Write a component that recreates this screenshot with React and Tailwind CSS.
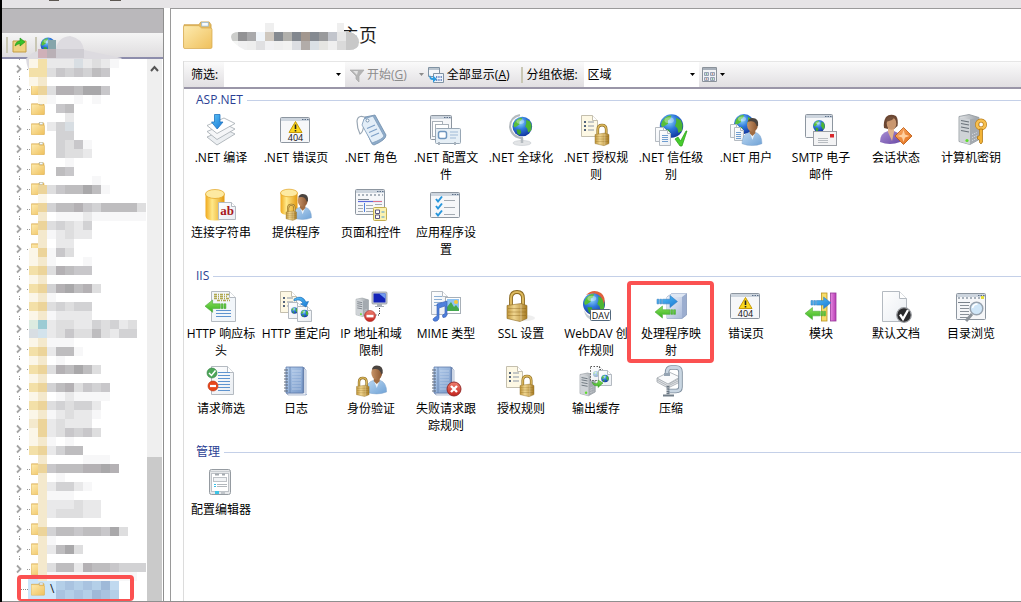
import React from "react";

/* ---------- shared drawing parts ---------- */

function Defs() {
  return (
    <svg width="0" height="0" className="absolute" aria-hidden="true">
      <defs>
        <linearGradient id="gFolder" x1="0" y1="0" x2="1" y2="1">
          <stop offset="0" stopColor="#fdebb0" /><stop offset="1" stopColor="#efc05c" />
        </linearGradient>
        <radialGradient id="gSea" cx="0.4" cy="0.3" r="0.75">
          <stop offset="0" stopColor="#8fd8fa" /><stop offset="0.45" stopColor="#2f78dc" /><stop offset="1" stopColor="#10309a" />
        </radialGradient>
        <linearGradient id="gGold" x1="0" y1="0" x2="1" y2="0">
          <stop offset="0" stopColor="#c0963a" /><stop offset="0.35" stopColor="#f0d690" /><stop offset="1" stopColor="#a87c24" />
        </linearGradient>
        <linearGradient id="gDb" x1="0" y1="0" x2="1" y2="0">
          <stop offset="0" stopColor="#f0a91c" /><stop offset="0.35" stopColor="#ffe98a" /><stop offset="1" stopColor="#e39a10" />
        </linearGradient>
        <linearGradient id="gBlue" x1="0" y1="0" x2="1" y2="1">
          <stop offset="0" stopColor="#5cc4f8" /><stop offset="1" stopColor="#1878d4" />
        </linearGradient>
        <linearGradient id="gGreen" x1="0" y1="0" x2="0" y2="1">
          <stop offset="0" stopColor="#8be05e" /><stop offset="1" stopColor="#35b11c" />
        </linearGradient>
        <linearGradient id="gServer" x1="0" y1="0" x2="1" y2="0">
          <stop offset="0" stopColor="#e4e6e8" /><stop offset="1" stopColor="#9aa0a6" />
        </linearGradient>
        <linearGradient id="gShirt" x1="0" y1="0" x2="1" y2="1">
          <stop offset="0" stopColor="#bcd8f2" /><stop offset="1" stopColor="#6fa2d6" />
        </linearGradient>
        <linearGradient id="gPurple" x1="0" y1="0" x2="1" y2="1">
          <stop offset="0" stopColor="#a98fd4" /><stop offset="1" stopColor="#6b4ba6" />
        </linearGradient>
        <linearGradient id="gSkin" x1="0" y1="0" x2="1" y2="0">
          <stop offset="0" stopColor="#c89468" /><stop offset="1" stopColor="#8a5530" />
        </linearGradient>
        <linearGradient id="gPage" x1="0" y1="0" x2="1" y2="1">
          <stop offset="0" stopColor="#ffffff" /><stop offset="1" stopColor="#e9edf2" />
        </linearGradient>
        <linearGradient id="gBook" x1="0" y1="0" x2="1" y2="1">
          <stop offset="0" stopColor="#b4cdec" /><stop offset="1" stopColor="#7899c9" />
        </linearGradient>
        <linearGradient id="gBox" x1="0" y1="0" x2="1" y2="1">
          <stop offset="0" stopColor="#eef2fa" /><stop offset="1" stopColor="#a9bada" />
        </linearGradient>
        <linearGradient id="gRed" x1="0" y1="0" x2="0" y2="1">
          <stop offset="0" stopColor="#f08070" /><stop offset="1" stopColor="#c4221c" />
        </linearGradient>
        <linearGradient id="gOrange" x1="0" y1="0" x2="1" y2="1">
          <stop offset="0" stopColor="#fbb070" /><stop offset="1" stopColor="#e06a12" />
        </linearGradient>
        <linearGradient id="gPink" x1="0" y1="0" x2="1" y2="0">
          <stop offset="0" stopColor="#e58ae0" /><stop offset="1" stopColor="#b83cb4" />
        </linearGradient>
      </defs>
    </svg>
  );
}

const at = (x, y, s = 1) => `translate(${x} ${y}) scale(${s})`;

function Globe({ x, y, r }) {
  return (
    <g transform={at(x, y, r / 10)}>
      <circle r="10" fill="url(#gSea)" />
      <path d="M-8 -4 Q-5 -9 0 -9 L-1 -6 L-3 -5 L-3 -2 L-6 0 L-8 1 L-9 -1Z" fill="#58bf3a" />
      <path d="M-6 3 L-2 3 L-1 6 L-3 9 L-5 7Z" fill="#3da62e" />
      <path d="M4 -7 L8 -5 L9.500 -1 L9 4 L6 6 L5 2 L3 0 L4 -3Z" fill="#4cb534" />
      <ellipse cx="-2" cy="-5" rx="4" ry="2.500" fill="#fff" opacity="0.35" />
    </g>
  );
}

function Page({ x, y, w, h, fold = 5, fill = "url(#gPage)", stroke = "#b4bac1", dash }) {
  return (
    <g>
      <path d={`M${x} ${y}H${x + w - fold}L${x + w} ${y + fold}V${y + h}H${x}Z`} fill={fill} stroke={stroke} strokeDasharray={dash} />
      <path d={`M${x + w - fold} ${y}V${y + fold}H${x + w}`} fill="#fff" stroke={stroke} strokeDasharray={dash} />
    </g>
  );
}

function Win({ x, y, w, h }) {
  return (
    <g>
      <rect x={x + 0.5} y={y + 0.5} width={w - 1} height={h - 1} rx="1" fill="#f6f7f9" stroke="#8d96a0" />
      <rect x={x + 1} y={y + 1} width={w - 2} height="3" fill="#cdd5de" />
      <path d={`M${x + w - 8} ${y + 2.5}h1.5m1 0h1.5m1 0h1.5`} stroke="#5b6e88" strokeWidth="1.2" />
    </g>
  );
}

function Lock({ x, y, s = 1 }) {
  return (
    <g transform={at(x, y, s)}>
      <path d="M4 15V8Q4 1.5 10 1.5Q16 1.5 16 8V15" fill="none" stroke="#8a681f" strokeWidth="3.800" />
      <path d="M4 15V8Q4 1.5 10 1.5Q16 1.5 16 8V15" fill="none" stroke="#dcb95e" strokeWidth="2" />
      <path d="M0 15L14 13L20 15V28L13 31L0 28Z" fill="url(#gGold)" stroke="#8f6c24" strokeWidth="0.6" />
      <path d="M1 18H19M1 21.5H19M1 25H19" stroke="#7d5a14" strokeOpacity="0.35" />
      <path d="M14 14V31" stroke="#fff" strokeOpacity="0.35" />
    </g>
  );
}

function Server({ x, y, s = 1 }) {
  return (
    <g transform={at(x, y, s)}>
      <path d="M0 2L10 0L20 3V25L11 30L0 27Z" fill="url(#gServer)" stroke="#8d949a" strokeWidth="0.8" />
      <path d="M11 5V30L20 25V3Z" fill="#a4aab0" />
      <path d="M1 3L11 5V30L1 27Z" fill="#cfd3d7" />
      <path d="M2 6L10 7.5M2 9L10 10.5M2 12.5L10 14M2 16L10 17.5" stroke="#6a727a" strokeWidth="1.2" />
      <path d="M13 20l5-2M13 23l5-2M13 26l5-2" stroke="#e4e7ea" strokeWidth="0.9" strokeDasharray="1 1" />
      <circle cx="8" cy="26" r="1.6" fill="#5edc2c" />
    </g>
  );
}

function Person({ x, y, s = 1 }) {
  return (
    <g transform={at(x, y, s)}>
      <path d="M0 27Q0 17 8 15H14Q21 17 21 27Q11 31 0 27Z" fill="url(#gShirt)" stroke="#7aa0ca" strokeWidth="0.5" />
      <path d="M8 15L11 23L14 15Z" fill="#eaf2fa" />
      <path d="M8 11H14V16L11 19L8 16Z" fill="#a06c42" />
      <ellipse cx="11" cy="7.5" rx="5.6" ry="7" fill="url(#gSkin)" />
      <path d="M6 4Q7 0 11 0Q18 0 17 8Q15.500 10 15 7Q13 3 9 3.500Z" fill="#4a4440" />
    </g>
  );
}

function FolderShape() {
  return (
    <g>
      <path d="M1 4H17L19 1H28L30 4V28H1Z" fill="#e9bd5e" stroke="#c99a3c" strokeWidth="0.8" />
      <rect x="20" y="1.5" width="7" height="4" fill="#f8fbfe" stroke="#93b8d8" strokeWidth="0.8" />
      <path d="M0.500 6Q0.500 5 2 5H17L20 7.500H29Q31 7.500 31 9V28Q31 29.500 29 29.500H2Q0.500 29.500 0.500 28Z" fill="url(#gFolder)" stroke="#d5a94f" strokeWidth="0.8" />
    </g>
  );
}

const arrowR = "M6 4H14V0L22 6.500L14 13V9H6ZM3 4H5V9H3ZM0 4H2V9H0Z";
function Arrow({ x, y, s = 1, left }) {
  return (
    <path
      transform={left ? `translate(${x + 22 * s} ${y}) scale(${-s} ${s})` : at(x, y, s)}
      d={arrowR} fill={left ? "url(#gGreen)" : "url(#gBlue)"} stroke={left ? "#45a534" : "#2f79c0"} strokeWidth="0.6"
    />
  );
}

function Lines({ x, y, w, n, gap = 3, color = "#6f9dd0" }) {
  return (
    <g stroke={color}>
      {Array.from({ length: n }, (_, i) => <path key={i} d={`M${x} ${y + i * gap}H${x + w}`} />)}
    </g>
  );
}

function Bullets({ x, y }) {
  return (
    <g stroke="#55657c" strokeWidth="1.2">
      <path d={`M${x} ${y}h2M${x} ${y + 4}h2M${x} ${y + 8}h2`} strokeWidth="2" />
      <path d={`M${x + 4} ${y}h6M${x + 4} ${y + 4}h6M${x + 4} ${y + 8}h6`} stroke="#8b96a5" />
    </g>
  );
}

const Notebook = ({ x }) => (
  <g transform={at(x, 0)}>
    <path d="M2 2H19Q21 2 21 4V28L23 30H4L2 28Z" fill="#6883b0" />
    <path d="M4 30H22V5L20 3V28H3Z" fill="#f0f3f8" stroke="#8497b8" strokeWidth="0.6" />
    <path d="M2 2H19V28H2Z" fill="url(#gBook)" stroke="#5f7cab" strokeWidth="0.8" />
    <path d="M6 2V28" stroke="#5a78a8" strokeWidth="0.7" />
    <path d="M8 6H17M8 9H17M8 12H17M8 15H17M8 18H17M8 21H17M8 24H17" stroke="#fff" strokeOpacity="0.35" />
    <path d="M0 5H4M0 8H4M0 11H4M0 14H4M0 17H4M0 20H4M0 23H4M0 26H4" stroke="#5d6878" strokeWidth="1.2" />
  </g>
);

const AuthRules = () => (
  <g>
    <Page x={1.5} y={1.5} w={16} h={21} fill="#fdf8e4" stroke="#c4bfae" />
    <Bullets x={4} y={8} />
    <Lock x={15} y={10} s={0.7} />
  </g>
);

const ErrorPage = () => (
  <g>
    <Win x={0} y={3} w={30} h={26} />
    <path d="M15.500 7.500L22 18.500H9Z" fill="#fcd81c" stroke="#c79b08" strokeLinejoin="round" />
    <path d="M15.500 10.500V15M15.500 16V17.500" stroke="#222" strokeWidth="1.6" />
    <text x="15.500" y="27" textAnchor="middle" fontSize="9" fontFamily="Open Sans, sans-serif" fill="#111">404</text>
  </g>
);

const icons = {
  compile: (
    <g stroke="#a2a9b0" strokeWidth="0.8">
      <path d="M2 23L20 15L30 20L12 31Z" fill="#eceff2" />
      <path d="M2 17.500L20 10L30 15L12 25.500Z" fill="#f5f6f8" />
      <path d="M2 11.500L19 4L30 9.500L12 19.500Z" fill="#fff" />
      <path d="M9.500 0.500H15V8H18L12.200 15L6.500 8H9.500Z" fill="url(#gBlue)" stroke="#2275c0" />
    </g>
  ),
  error: <ErrorPage />,
  roles: (
    <g>
      <path d="M14 5Q3 -1 2 7Q2 14 5 20Q8 19 9 10" fill="none" stroke="#9aa7b4" strokeWidth="1.2" />
      <path d="M10 3L20 1L31 21Q31 26 19 31Q17 31 16 28L8 10Z" fill="#8fadcb" stroke="#6f8ca9" strokeWidth="0.8" />
      <path d="M9 5L18 2L29 22Q28 25 17 29L7 11Z" fill="#e3eef8" stroke="#7f9cba" strokeWidth="0.8" />
      <circle cx="12.500" cy="6.500" r="1.500" fill="#fff" stroke="#5f7f9f" strokeWidth="0.8" />
      <path d="M12 14.500L20 11M14 18.500L22 15M16 22.500L24 19" stroke="#7d9fc6" strokeWidth="1.2" />
    </g>
  ),
  config: (
    <g>
      <Win x={0} y={1} w={22} h={25} />
      <rect x="2.500" y="7.500" width="10" height="15" fill="#fff" stroke="#a8b0b8" />
      <rect x="5.500" y="10.500" width="13" height="9" fill="#fff" stroke="#a8b0b8" />
      <rect x="5.500" y="14.500" width="25" height="15" rx="1" fill="#e6eff6" stroke="#98a7b5" />
      <rect x="8.500" y="17.500" width="8" height="7" rx="2" fill="#fff" stroke="#6f96be" strokeWidth="1.500" />
      <path d="M20 18h8M20 21h8M20 24h6" stroke="#9dbad6" strokeWidth="1.200" />
      <path d="M9 28v3M25 28v3" stroke="#a8b3be" strokeWidth="2" />
    </g>
  ),
  globalization: (
    <g>
      <ellipse cx="17" cy="29" rx="9" ry="2.500" fill="#e2e4e6" stroke="#c5cacf" strokeWidth="0.600" />
      <path d="M17 24V29" stroke="#b4babf" strokeWidth="2.500" />
      <path d="M15 1Q5 3 5 13Q7 24 18 24" fill="none" stroke="#b4babf" strokeWidth="2" />
      <Globe x={17.300} y={12.500} r={9.800} />
    </g>
  ),
  authRules: <AuthRules />,
  trust: (
    <g>
      <Globe x={16.500} y={12} r={11.700} />
      <Page x={0.500} y={13.500} w={11} h={14} fold={3} />
      <Page x={4.500} y={16.500} w={11} h={15} fold={3} />
      <Lines x={7} y={21.500} w={6} n={4} gap={2} />
      <path d="M20 25L23 23L25.500 27L31 17H32L27 32H25Z" fill="#46cc2d" stroke="#2a9c18" strokeWidth="0.700" />
    </g>
  ),
  users: (
    <g>
      <Globe x={14} y={10} r={10} />
      <Page x={0.500} y={10.500} w={9} h={13} fold={3} />
      <Page x={4.500} y={13.500} w={9} h={13} fold={3} />
      <Lines x={6} y={18.500} w={5} n={4} gap={2} />
      <Person x={12} y={4} s={0.950} />
    </g>
  ),
  smtp: (
    <g>
      <Win x={0} y={0} w={28} h={24} />
      <Globe x={14} y={12} r={6} />
      <rect x="8.500" y="17.500" width="23" height="14" fill="#f3f3f4" stroke="#9b9fa5" />
      <path d="M13 24.500H23M13 26.500H23M13 28.500H23" stroke="#b8bcc1" />
      <rect x="25" y="20" width="4" height="3.500" fill="#d8282c" />
    </g>
  ),
  session: (
    <g>
      <path d="M4 14Q3 8 6 3Q10 -1 16 2Q18.500 5 17.500 12L14 15H8Z" fill="#6b4632" />
      <path d="M0 28Q0 19 8 17H14Q21 19 20 28Q10 32 0 28Z" fill="url(#gPurple)" />
      <path d="M8 13H14V18L12 27L8 18Z" fill="#e0b48e" />
      <ellipse cx="11.500" cy="9.500" rx="4.800" ry="6.200" fill="#c99770" />
      <path d="M6 8Q7 1 15 3L12 6Z" fill="#74503a" />
      <path d="M23.500 13.500L32 22L23.500 30.500L15 22Z" fill="url(#gOrange)" stroke="#b9570e" strokeWidth="0.800" />
      <path d="M23.500 16L25 20.500L29.500 22L25 23.500L23.500 28L22 23.500L17.500 22L22 20.500Z" fill="#ffd0a0" />
    </g>
  ),
  machineKey: (
    <g>
      <Server x={4} y={0.500} />
      <circle cx="26" cy="10.500" r="4" fill="none" stroke="#b97f1e" strokeWidth="4" />
      <circle cx="26" cy="10.500" r="4" fill="none" stroke="#f7c050" strokeWidth="2.700" />
      <path d="M24.500 15H27.500V28L26 30L24.500 28.500V26L22.500 25V22.500L24.500 21.500Z" fill="#f3b335" stroke="#a86d0c" strokeWidth="0.700" />
    </g>
  ),
  connection: (
    <g>
      <path d="M0.500 5V27Q0.500 31.500 10 31.500Q19.500 31.500 19.500 27V5Z" fill="url(#gDb)" />
      <ellipse cx="10" cy="5" rx="9.500" ry="4.500" fill="#fdeaa2" stroke="#e1a220" strokeWidth="0.700" />
      <Page x={13.500} y={13.500} w={17} h={17} fold={4} />
      <text x="22" y="26" textAnchor="middle" fontSize="13" fontWeight="700" fontFamily="Liberation Serif, serif" fill="#a81820">ab</text>
    </g>
  ),
  provider: (
    <g>
      <path d="M0.500 4V22Q0.500 26 9 26Q17.500 26 17.500 22V4Z" fill="url(#gDb)" />
      <ellipse cx="9" cy="4" rx="8.500" ry="3.800" fill="#fdeaa2" stroke="#e1a220" strokeWidth="0.700" />
      <Person x={13} y={5} s={0.880} />
      <Lock x={6} y={15} s={0.530} />
    </g>
  ),
  controls: (
    <g>
      <Win x={0} y={0} w={30} h={26} />
      <path d="M3 6h25" stroke="#a9b2bc" strokeWidth="2" strokeDasharray="2 2" />
      <path d="M3 10.500H14" stroke="#7f8994" />
      <path d="M3 12.500H27" stroke="#5a68da" strokeWidth="1.200" />
      <path d="M18 12.500H27" stroke="#e0708a" />
      <path d="M9.500 14V23" stroke="#4d7fe0" />
      <Lines x={3} y={16.500} w={5} n={3} gap={3} color="#a3aab2" />
      <Lines x={11} y={16.500} w={7} n={3} gap={3} color="#a3aab2" />
      <Lines x={20} y={15.500} w={7} n={1} color="#a3aab2" />
      <rect x="18.500" y="18.500" width="13" height="13" rx="1" fill="#fbf2b0" stroke="#c3ae50" />
      <path d="M20.500 21h4v3.500h-4zM20.500 26h4v3.500h-4z" fill="#fff" stroke="#5c5580" />
      <path d="M26.500 23h3M26.500 28h3" stroke="#4a9cd4" />
    </g>
  ),
  appSettings: (
    <g>
      <Win x={0} y={3} w={30} h={26} />
      <path d="M6 10l2 2.500l4-5M6 17l2 2.500l4-5M6 24l2 2.500l4-5" fill="none" stroke="#2796dc" strokeWidth="2" />
      <path d="M14 11.500h11M14 18.500h11M14 25.500h11" stroke="#a3aab2" />
    </g>
  ),
  headers: (
    <g>
      <Page x={6.500} y={1.500} w={24} h={30} fold={6} fill="#f2f6fa" />
      <path d="M9 4.500h15M9 6.500h13M9 8.500h15M12 10.500h13" stroke="#b0a850" strokeWidth="1.300" strokeDasharray="3 1 1 1" />
      <Arrow x={0} y={10} s={0.950} left />
      <Lines x={11} y={20.500} w={15} n={3} gap={3} color="#5f94cf" />
    </g>
  ),
  redirect: (
    <g>
      <Page x={0.500} y={1.500} w={16} h={21} fill="#fdf8e4" stroke="#c4bfae" />
      <Bullets x={3} y={8} />
      <Page x={8.500} y={12.500} w={13} h={16} fold={4} />
      <Globe x={14.500} y={20.500} r={3.300} />
      <Page x={17.500} y={16.500} w={14} h={15} fold={4} />
      <Globe x={24.500} y={23.500} r={3.800} />
      <path d="M14 9Q22 4 26 12L28.500 11.500L26 17L20.500 14L23 13Q20 8 14 11Z" fill="url(#gBlue)" stroke="#1b68b4" strokeWidth="0.600" />
    </g>
  ),
  ipRestrict: (
    <g>
      <Server x={1} y={8} s={0.620} />
      <rect x="17" y="2" width="15" height="12" rx="1" fill="#c9ced4" stroke="#868d95" strokeWidth="0.700" />
      <path d="M18.500 3.500H30.500V12.500H18.500Z" fill="#1424b8" />
      <path d="M24 3.500H30.500V9Z" fill="#6f9af0" />
      <path d="M22 14h5v2h2v1h-9v-1h2z" fill="#a9b0b7" />
      <path d="M24.500 18V25H20" fill="none" stroke="#222" strokeDasharray="1 1.500" />
      <circle cx="15" cy="26" r="5.500" fill="url(#gRed)" stroke="#a32420" strokeWidth="0.600" />
      <rect x="11.500" y="24.800" width="7" height="2.600" fill="#fff" />
    </g>
  ),
  mime: (
    <g>
      <Page x={1.500} y={1.500} w={16} h={23} />
      <Lines x={4} y={6.500} w={8} n={4} gap={3} color="#8eb0d4" />
      <rect x="15.500" y="7.500" width="15" height="16" fill="#fff" stroke="#a8b0b8" />
      <path d="M17 9H29V21H17Z" fill="#8fc3f2" />
      <path d="M17 21V17L21 12L24 17L26 15L29 19V21Z" fill="#45a94e" />
      <circle cx="26" cy="12" r="2" fill="#f6c93c" />
      <path d="M7 14L17 11V25Q16 28 13 27.500Q11 25 15 23.500V16L9 18V28Q8 32 4 31Q1 29 7 26Z" fill="#4f80dc" stroke="#345ab0" strokeWidth="0.600" />
    </g>
  ),
  ssl: <g><ellipse cx="20" cy="28" rx="10" ry="3" fill="#ddd" opacity="0.500" /><Lock x={2} y={0.500} /></g>,
  webdav: (
    <g>
      <Globe x={14} y={14} r={11} />
      <path d="M6 5Q13 -2 21 3Q26 7 24 14Q22 5 15 3.500Q10 3 6 5Z" fill="#e0603c" />
      <path d="M4 20Q8 28 16 27L12 30Q5 28 4 20Z" fill="#c4cbd2" />
      <rect x="10.500" y="19.500" width="20" height="11" rx="1" fill="#fff" stroke="#53687c" />
      <text x="20.500" y="28.500" textAnchor="middle" fontSize="9" fontFamily="Open Sans, sans-serif" fill="#111">DAV</text>
    </g>
  ),
  handlers: (
    <g>
      <path d="M12 7L17 3.500H31.500V25L27 28.500H12Z" fill="#9badcf" stroke="#7f92b6" strokeWidth="0.700" />
      <path d="M12 7H27V28.500H12Z" fill="url(#gBox)" />
      <path d="M12 7L17 3.500H31.500L27 7Z" fill="#dfe7f3" />
      <Arrow x={2} y={5.500} s={0.930} />
      <Arrow x={0} y={16} s={0.930} left />
    </g>
  ),
  modules: (
    <g>
      <rect x="16.500" y="3" width="5.500" height="28" fill="#f7dc68" stroke="#b99420" strokeWidth="0.800" />
      <rect x="25.500" y="3" width="5.500" height="28" fill="url(#gPink)" stroke="#96389a" strokeWidth="0.800" />
      <Arrow x={6} y={7} s={0.900} />
      <Arrow x={0} y={17.500} s={0.930} left />
    </g>
  ),
  defaultDoc: (
    <g>
      <Page x={2.500} y={1.500} w={24} h={30} fold={7} />
      <circle cx="24" cy="25" r="7.300" fill="#2a2a2c" stroke="#9b9ea2" strokeWidth="1.200" />
      <path d="M20 24.500L23 29L28 20" fill="none" stroke="#fff" strokeWidth="2.300" />
    </g>
  ),
  browse: (
    <g>
      <Win x={1} y={3} w={30} h={27} />
      <path d="M3 8h25" stroke="#a9b2bc" strokeWidth="2" strokeDasharray="2 2" />
      <path d="M26 6h3v3h-3z" fill="#e6df3a" />
      <Lines x={3} y={12.500} w={12} n={1} color="#7a828b" />
      <Lines x={5} y={15.500} w={9} n={5} gap={3} color="#8a9199" />
      <path d="M17 24L11 31" stroke="#8b9299" strokeWidth="3" />
      <circle cx="21.500" cy="18.500" r="6.300" fill="#cfe6f8" stroke="#97a2ae" strokeWidth="1.500" />
      <path d="M17.500 18Q18.500 14 22.500 14" fill="none" stroke="#fff" strokeWidth="1.500" />
    </g>
  ),
  filtering: (
    <g>
      <Page x={6.500} y={1.500} w={22} h={28} fold={6} />
      <Lines x={13} y={7.500} w={12} n={7} gap={3} color="#5f94cf" />
      <circle cx="7" cy="8" r="5" fill="#4ca658" stroke="#357f45" strokeWidth="0.600" />
      <path d="M4 8L6.500 10.500L10.500 5.500" fill="none" stroke="#fff" strokeWidth="1.500" />
      <circle cx="8" cy="21" r="5" fill="#e8471c" stroke="#b33010" strokeWidth="0.600" />
      <path d="M5 21H11" stroke="#fff" strokeWidth="2.200" />
    </g>
  ),
  logging: <Notebook x={4} />,
  authn: <g><Person x={11} y={0.500} s={0.980} /><Lock x={1.500} y={12} s={0.630} /></g>,
  failedTrace: (
    <g>
      <Notebook x={2} />
      <circle cx="24" cy="24" r="7" fill="url(#gRed)" stroke="#8d2020" strokeWidth="0.900" />
      <path d="M21 21L27 27M27 21L21 27" stroke="#fff" strokeWidth="2.400" />
    </g>
  ),
  outputCache: (
    <g>
      <Server x={0} y={8} s={0.760} />
      <Page x={10.500} y={1.500} w={12} h={14} fold={3} stroke="#555" dash="1.500 1.500" />
      <g opacity="0.4"><Globe x={16} y={9} r={3} /></g>
      <Page x={18.500} y={5.500} w={13} h={15} fold={4} />
      <Globe x={25} y={13.500} r={3.800} />
      <path d="M12 17Q15 20 18 17.500V15L23 18L18 22.500V20.500Q14 22 12 17Z" fill="url(#gGreen)" stroke="#2f9120" strokeWidth="0.500" />
    </g>
  ),
  compress: (
    <g>
      <path d="M2 17L13 23L25 17V13L14 19L2 13Z" fill="#e2e4e6" stroke="#a2a8ae" strokeWidth="0.800" />
      <path d="M2 13L14 7L25 12L13 19Z" fill="#fafbfc" stroke="#a2a8ae" strokeWidth="0.800" />
      <path d="M2 15L13 21L25 15" fill="none" stroke="#9da4ab" strokeWidth="0.700" />
      <path d="M12 8Q12 2.500 16 2.500H21Q25.500 2.500 25.500 7V22Q25.500 26 21 26H13" fill="none" stroke="#7d8d9d" strokeWidth="4.500" />
      <path d="M12 8Q12 2.500 16 2.500H21Q25.500 2.500 25.500 7V22Q25.500 26 21 26H13" fill="none" stroke="#c9d6e2" strokeWidth="2.800" />
      <path d="M9 8H15V11H9Z" fill="#95a4b3" />
      <path d="M13 21V31" stroke="#6b7782" strokeWidth="3" strokeDasharray="1.500 0.700" />
      <path d="M8 30.500H19" stroke="#727e89" strokeWidth="2" />
    </g>
  ),
  configEditor: (
    <g>
      <rect x="4.500" y="3.500" width="21" height="25" rx="2" fill="#e6e8ea" stroke="#959ba1" />
      <path d="M5 5.500H25" stroke="#c9cdd1" />
      <rect x="6.500" y="7.500" width="17" height="18" fill="#fff" stroke="#bec2c7" />
      <path d="M10 8.500h4M17 8.500h3" stroke="#a3a9af" strokeWidth="2" />
      <rect x="8.500" y="11.500" width="13" height="4" fill="#f1f3f5" stroke="#bec2c7" />
      <path d="M9 18.500H11M9 20.500H11" stroke="#39bfe8" />
      <path d="M12 18.500H22M12 20.500H22" stroke="#b2b7bc" />
      <rect x="10" y="25" width="4" height="3" fill="#3cc4e6" />
      <rect x="16" y="25" width="4" height="3" fill="#c0c5ca" />
    </g>
  ),
};

/* ---------- data ---------- */

const sections = [
  {
    title: "ASP.NET",
    items: [
      ["compile", ".NET 编译"], ["error", ".NET 错误页"], ["roles", ".NET 角色"], ["config", ".NET 配置文", "件"],
      ["globalization", ".NET 全球化"], ["authRules", ".NET 授权规", "则"], ["trust", ".NET 信任级", "别"], ["users", ".NET 用户"],
      ["smtp", "SMTP 电子", "邮件"], ["session", "会话状态"], ["machineKey", "计算机密钥"], ["connection", "连接字符串"],
      ["provider", "提供程序"], ["controls", "页面和控件"], ["appSettings", "应用程序设", "置"],
    ],
  },
  {
    title: "IIS",
    items: [
      ["headers", "HTTP 响应标", "头"], ["redirect", "HTTP 重定向"], ["ipRestrict", "IP 地址和域", "限制"], ["mime", "MIME 类型"],
      ["ssl", "SSL 设置"], ["webdav", "WebDAV 创", "作规则"], ["handlers", "处理程序映", "射"], ["error", "错误页"],
      ["modules", "模块"], ["defaultDoc", "默认文档"], ["browse", "目录浏览"], ["filtering", "请求筛选"],
      ["logging", "日志"], ["authn", "身份验证"], ["failedTrace", "失败请求跟", "踪规则"], ["authRules", "授权规则"],
      ["outputCache", "输出缓存"], ["compress", "压缩"],
    ],
  },
  { title: "管理", items: [["configEditor", "配置编辑器"]] },
];

/* Blurred-out tree names: one string per 9px band, one character per 9px block. */
const palette = {
  y: "#fbf6e8", a: "#f4e9cd", Y: "#f3e0a8", Z: "#ecd49a",
  1: "#f7f7f8", 2: "#e9e9ea", 3: "#dededf", 4: "#d2d2d4", 5: "#c8c7ca", 6: "#bebdbf", 7: "#b4b1b4", 8: "#a9a8aa",
  g: "#dcebe0", t: "#9ccbd4", b: "#d8dee3", s: "#d3e3ec",
  m: "#b4cfe8", n: "#a9c3e0", o: "#c0d9ef", p: "#9fb9d8",
};
const mosaic = [
  "yY222b2321", "YY3545465", "ya", ".Z3776885", ".y1..1.1", "...56", "....2", "..24b", "...44", "...4351", "...4332",
  "....1", "...65", ".......1", ".Z3566861", ".y", ".Z46675466663", ".a.1112111111", ".Z34324", ".a12322", ".a.22", "yZ153",
  "ya1...1", "YZ37655", "ya", "YZ478673", "ya1", "YZ34344", "ya12222", "gt2332243423", "bs2353363244", "ya111", "YZ2661",
  "ya.1", "YZ376863", "ya", "YZ4673545", "ya.121111", "YZ343442", "ya123221", "aZ23222", "yZ235453", "ya1.1", "YZ2466",
  ".a....111", ".Z56667787", ".a.1", ".a24421", ".a111", ".a222322", ".a233322", ".a", ".Z466566583", ".a1", ".a2683", ".a",
  ".a36627665444", ".a1111111111", "...mnmnmpo", "...nmnmpnm",
];

const font = "font-['Open_Sans','Noto_Sans_CJK_SC',sans-serif]";

/* ---------- interface ---------- */

function Tri({ className = "" }) {
  return (
    <svg viewBox="0 0 5 3" className={"h-[3px] w-[5px] shrink-0 " + className} aria-hidden="true">
      <path d="M0 0H5L2.500 3Z" fill="currentColor" />
    </svg>
  );
}

function TreeRow({ selected }) {
  return (
    <li className="flex h-5 items-center">
      {selected ? (
        <button type="button" aria-label="网站" className="ml-[18px] flex h-5 items-center">
          <span className="w-2 border-t border-dotted border-[#888]" />
          <span className="flex h-5 w-[91px] items-center bg-[#cce6fa] pl-[3px] text-xs leading-5 text-[#222]">
            <svg viewBox="0 0 32 30" className="h-[14px] w-[14px]"><FolderShape /></svg>
            <span className="ml-[5px]">\</span>
          </span>
        </button>
      ) : (
        <button type="button" aria-label="展开" className="flex h-5 items-center pl-[13px]">
          <svg viewBox="0 0 32 20" className="h-5 w-8" aria-hidden="true">
            <path d="M2 6.500L5.500 10L2 13.500" fill="none" stroke="#a3a3a3" strokeWidth="1.800" />
            <path d="M4.500 0V1M4.500 17V20" stroke="#999" strokeDasharray="1 1" />
            <path d="M12 10.500H16" stroke="#999" strokeDasharray="1 1" />
            <svg x="16" y="3" width="14" height="13" viewBox="0 0 32 30"><FolderShape /></svg>
          </svg>
        </button>
      )}
    </li>
  );
}

function Sidebar() {
  return (
    <aside className="flex w-[162px] shrink-0 flex-col border-t border-r border-[#8f8f8f] bg-white">
      <div className="h-6 shrink-0 bg-[#bab8bb]" />
      <div className="relative flex h-[26px] shrink-0 items-center border-b-2 border-[#8d8dac] bg-gradient-to-b from-[#f5f5f5] to-[#dfdddf]">
        <span className="ml-1 h-4 w-[2px] bg-[#c9c7b4]" />
        <button type="button" aria-label="向上" className="ml-1">
          <svg viewBox="0 0 16 16" className="h-4 w-4">
            <path d="M1 4H14V15H1Z" fill="#f0d282" stroke="#c49d45" />
            <path d="M3 9Q4 4 8 4V1L13 5L8 9V6.500Q5 7 3 9Z" fill="#38c22a" stroke="#1d8f16" strokeWidth="0.600" />
          </svg>
        </button>
        <span className="ml-[7px] h-4 w-[2px] bg-[#c9c7b4]" />
        <button type="button" aria-label="连接" className="ml-[3px]">
          <svg viewBox="0 0 16 16" className="h-4 w-4"><Globe x={8} y={8} r={7.500} /></svg>
        </button>
        <svg viewBox="0 0 98 46" className="absolute left-[22px] top-[2px] h-[46px] w-[98px]" aria-hidden="true">
          <path d="M2 24Q8 16 20 14H32Q34 2 46 1Q58 3 60 15L98 23Q97 26 60 26H20V44Q4 44 2 24Z" fill="#dddbe0" />
          <path d="M24 5h8v9h-8z" fill="#86a5ab" />
          <path d="M14 14h9v9h-9z" fill="#cfb0b8" />
          <path d="M23 14h9v9h-9z" fill="#b9b0b6" />
          <path d="M32 14h28v9H32z" fill="#cfcdd3" />
        </svg>
      </div>
      <div className="relative flex min-h-0 grow overflow-hidden">
        <ul className="min-w-0 grow">
          {Array.from({ length: 27 }, (_, i) => <TreeRow key={i} selected={i === 26} />)}
        </ul>
        <div className="mr-px flex w-[15px] shrink-0 flex-col items-center bg-[#efefef]">
          <svg viewBox="0 0 15 20" className="h-5 w-[15px]"><path d="M4 12L7.500 8L11 12" fill="none" stroke="#555" strokeWidth="2" /></svg>
          <div className="mt-auto h-[144px] w-full bg-[#cacaca]" />
        </div>
        <svg viewBox="0 0 120 543" className="pointer-events-none absolute left-[27px] top-0 h-[543px] w-[120px]" shapeRendering="crispEdges" aria-hidden="true">
          {mosaic.flatMap((row, r) =>
            [...row].map((c, i) => (c === "." ? null : <rect key={r + "-" + i} x={i * 9} y={r * 9} width="9" height="9" fill={palette[c]} />))
          )}
        </svg>
        <div className="pointer-events-none absolute bottom-0 left-[15px] h-[26px] w-[117px] rounded-sm border-4 border-b-2 border-[#fb5151]" />
      </div>
    </aside>
  );
}

function TitleBar() {
  const top = ["#cccdcb", "#929294", "#a9a9ab", "#f0f5fa", "#cfc8bf", "#858a90", "#b1b0ac", "#82878e", "#a2978f", "#858a91", "#999a9c", "#c2c5cc", "#e6e6e6", "#c6c6c6"];
  const low = ["#f5f6f5", "#f0f0f1", "#eeeeee", "#e0e0e2", "#f1f1f3", "#efefef", "#f2f2f1", "#dcdee2", "#b2aca9", "#dae0e5", "#e5e5e2", "#efefef", "#dadada", "#d5d5d5"];
  return (
    <header className="flex h-[52px] items-center pl-3">
      <svg viewBox="0 0 32 30" className="h-7 w-[30px]" aria-hidden="true"><FolderShape /></svg>
      <h1 className="relative ml-[18px] pl-[110px] text-[18px] leading-6 text-[#1c1c1c]">
        主页
        <svg viewBox="0 0 128 28" className="absolute left-0 top-0 h-7 w-32" aria-hidden="true">
          <clipPath id="blob"><path d="M34 0H43V8H106V0H113V9H119Q128 12 128 19Q128 27 118 27H14Q0 20 0 14Q0 9 8 9H34Z" /></clipPath>
          <g clipPath="url(#blob)">
            <path d="M34 0H43V9H34ZM106 0H113V9H106Z" fill="#efefef" />
            {top.map((c, i) => <rect key={i} x={-2 + i * 9} y="9" width="9.200" height="9" fill={c} />)}
            {low.map((c, i) => <rect key={i} x={-2 + i * 9} y="18" width="9.200" height="9" fill={c} />)}
            <path d="M115 9H128V27H115Z" fill="#c8c8c8" />
          </g>
        </svg>
      </h1>
    </header>
  );
}

function Toolbar() {
  return (
    <div className="flex h-7 shrink-0 items-center whitespace-nowrap border-b-2 border-t border-b-[#9a96a8] border-t-[#e6e6e6] bg-gradient-to-b from-[#fafafa] to-[#e1dfe2] text-xs text-black">
      <label htmlFor="filter" className="w-10 pl-[7px]">筛选:</label>
      <div className="relative flex h-full w-[121px] items-center bg-white">
        <input id="filter" type="text" className="h-full w-full bg-transparent px-1 outline-none" />
        <Tri className="absolute right-1" />
      </div>
      <button type="button" className="ml-1 flex items-center gap-[2px] text-[#8c8c8c]">
        <svg viewBox="0 0 16 16" className="h-4 w-4" aria-hidden="true">
          <path d="M1 3H15L10 9V15L7 12V9Z" fill="#b4b4b4" stroke="#a9a9a9" strokeWidth="0.700" /><path d="M4 4H9L8 8Z" fill="#e2e2e2" />
        </svg>
        <span>开始(<u>G</u>)</span>
        <Tri className="ml-[10px]" />
      </button>
      <button type="button" className="ml-1 flex items-center gap-[3px]">
        <svg viewBox="0 0 16 16" className="h-4 w-4" aria-hidden="true">
          <path d="M0.500 0.500H11.500V9.500H0.500Z" fill="#f4f7fa" stroke="#8092a3" /><path d="M0.500 2H11.500" stroke="#8092a3" />
          <path d="M5.500 6.500H15.500V15.500H5.500Z" fill="#eef4fb" stroke="#8092a3" />
          <path d="M8 10h6M8 13h6" stroke="#4468b0" strokeWidth="1.300" strokeDasharray="1.300 1" />
          <path d="M2 7Q2 11 5 11V8.500L9 12L5 15.500V13Q0 13 2 7Z" fill="#2c9be0" />
        </svg>
        <span>全部显示(<u>A</u>)</span>
      </button>
      <span className="ml-[11px] h-4 w-[2px] bg-[#c9c7b4]" />
      <label htmlFor="group" className="ml-1 w-[57px]">分组依据:</label>
      <div className="relative flex h-full w-[115px] items-center bg-white">
        <select id="group" className="h-full w-full appearance-none bg-transparent pl-1 text-xs outline-none">
          <option>区域</option>
        </select>
        <Tri className="pointer-events-none absolute right-1" />
      </div>
      <button type="button" aria-label="视图" className="ml-[3px] flex items-center gap-[3px]">
        <svg viewBox="0 0 15 15" className="h-[15px] w-[15px]" aria-hidden="true">
          <path d="M0.500 0.500H14.500V14.500H0.500Z" fill="#f3f4f6" stroke="#8b929a" /><path d="M1 2H14" stroke="#a8b0ba" strokeWidth="2" />
          <path d="M2.500 5.500h4v3h-4zM8.500 5.500h4v3h-4zM2.500 10.500h4v3h-4zM8.500 10.500h4v3h-4z" fill="#cfd6e6" stroke="#8591a6" strokeWidth="0.800" />
          <path d="M4 7h1M10 12h1" stroke="#3a9a3c" /><path d="M10 7h1M4 12h1" stroke="#d2642a" />
        </svg>
        <Tri />
      </button>
    </div>
  );
}

function Feature({ icon, lines }) {
  return (
    <button type="button" className="relative flex h-[75px] flex-col items-center whitespace-nowrap pr-px pt-[3px] text-center text-xs leading-[17px] text-black">
      <svg viewBox="0 0 32 32" className="h-8 w-8 shrink-0 overflow-visible" aria-hidden="true">{icons[icon]}</svg>
      <span className="mt-[3px]">
        {lines.map((l) => <span key={l} className="block">{l}</span>)}
      </span>
      {icon === "handlers" && (
        <span className="pointer-events-none absolute -left-[7px] -top-[6px] h-[82px] w-[87px] rounded-sm border-4 border-[#fb5151] bg-transparent" />
      )}
    </button>
  );
}

export default function App() {
  return (
    <div className={"flex h-screen flex-col overflow-hidden border-l-2 border-black bg-white " + font}>
      <Defs />
      <div className="flex h-2 shrink-0 gap-[51px] bg-[#e6e4e6] pl-[47px]">
        <span className="h-px w-[10px] bg-[#5c5650]" />
        <span className="h-px w-[11px] bg-[#5c5650]" />
      </div>
      <div className="flex min-h-0 grow border-b border-[#8f8f8f]">
        <Sidebar />
        <main className="ml-[6px] flex min-w-0 grow flex-col border-l border-t border-[#9a9a9a] bg-white">
          <TitleBar />
          <div className="ml-3 flex min-h-0 grow flex-col overflow-hidden border-l border-[#dcdcdc]">
            <Toolbar />
            {sections.map((s) => (
              <section key={s.title} className="mb-1 shrink-0">
                <h2 className="flex h-[22px] items-center gap-1 pl-3 text-xs text-[#2b3f94] after:h-px after:grow after:bg-[#c4d0e8]">{s.title}</h2>
                <div className="grid grid-cols-[repeat(auto-fill,75px)]">
                  {s.items.map(([icon, ...lines]) => <Feature key={icon + lines[0]} icon={icon} lines={lines} />)}
                </div>
              </section>
            ))}
          </div>
        </main>
      </div>
    </div>
  );
}
